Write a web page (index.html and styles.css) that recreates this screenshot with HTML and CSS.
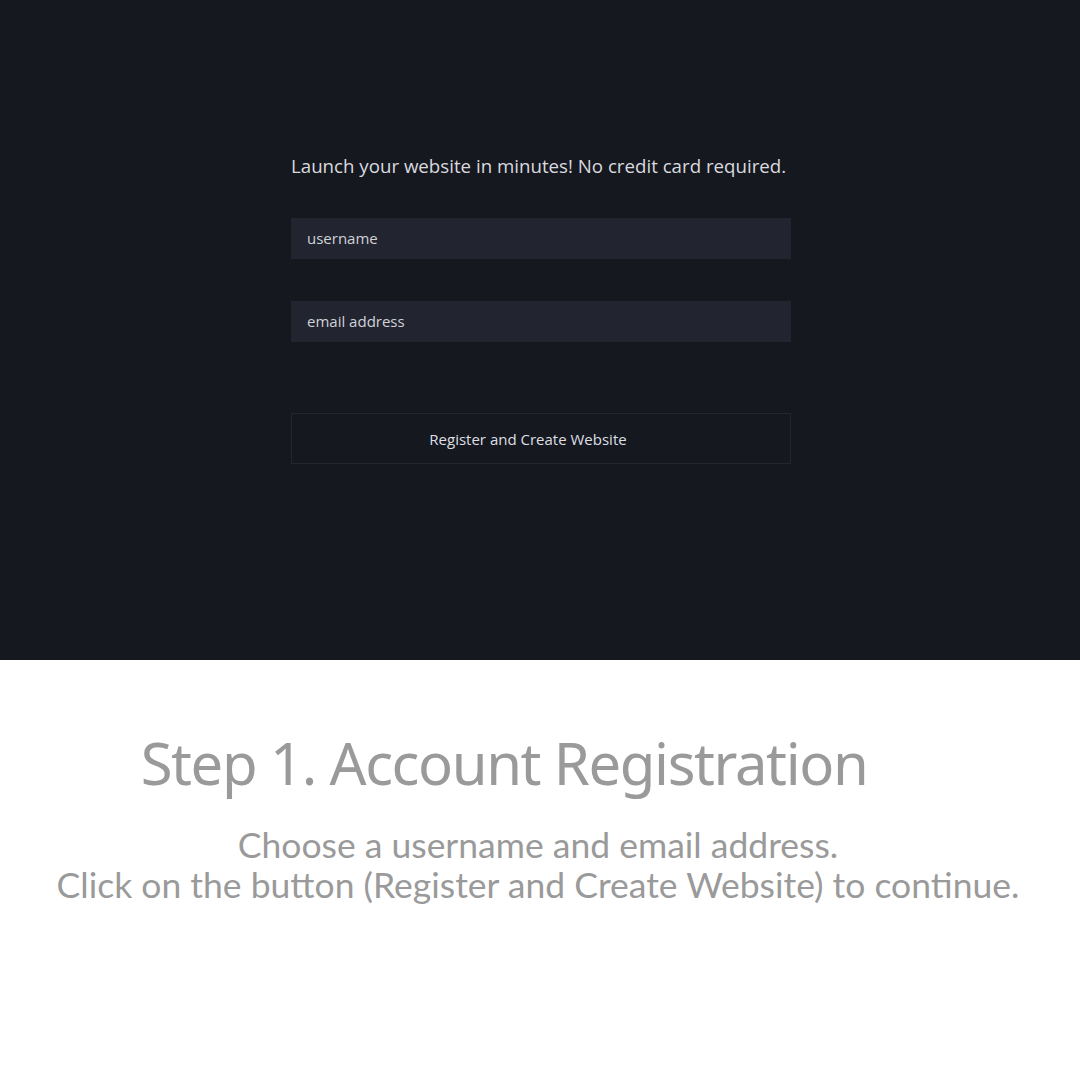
FILE: index.html
```html
<!doctype html>
<html>
<head>
  <title>Account Registration</title>
  <link rel="stylesheet" href="styles.css">
</head>
<body>
  <div class="signup-panel">
    <form class="signup-form">
      <p class="signup-lead">Launch your website in minutes! No credit card required.</p>
      <div class="signup-field">username</div>
      <div class="signup-field">email address</div>
      <button class="signup-button" type="button">Register and Create Website</button>
    </form>
  </div>
  <div class="step-info">
    <h1 class="step-title">Step 1. Account Registration</h1>
    <p class="step-text">Choose a username and email address.<br>Click on the button (Register and Create Website) to continue.</p>
  </div>
</body>
</html>
```

FILE: styles.css
```css
body, html {
  margin: 0;
  padding: 0;
  width: 100%;
}
body {
  background: #FFF;
  font-family: "Open Sans", "Noto Sans", sans-serif;
}
body * {
  box-sizing: border-box;
}
.signup-panel {
  height: 660px;
  background: #161820;
  display: flex;
  justify-content: center;
  padding: 150px 0 0 2px;
}
.signup-form {
  width: 500px;
  display: flex;
  flex-direction: column;
}
.signup-lead {
  margin: 0 0 36px;
  color: #D8DADF;
  font-size: 18.7px;
  line-height: 32px;
  white-space: nowrap;
}
.signup-field {
  height: 41px;
  margin-bottom: 42px;
  padding: 0 16px;
  background: #222430;
  color: #D0D2D8;
  font-size: 15px;
  line-height: 41px;
}
.signup-field + .signup-field {
  margin-bottom: 71px;
}
.signup-button {
  height: 51px;
  padding: 0 26px 0 0;
  border: 1px solid #23252F;
  background: #161820;
  color: #DDDFE3;
  font: 500 15px "Open Sans", sans-serif;
  cursor: pointer;
}
.step-info {
  text-align: center;
  color: #9A9A9A;
}
.step-title {
  margin: 65px 0 0;
  padding-right: 72px;
  font: 400 58px/76px "Noto Sans", sans-serif;
  letter-spacing: -1.4px;
}
.step-text {
  margin: 24px 0 0;
  padding-right: 4px;
  font: 400 35.5px/40px Lato, sans-serif;
}
```
